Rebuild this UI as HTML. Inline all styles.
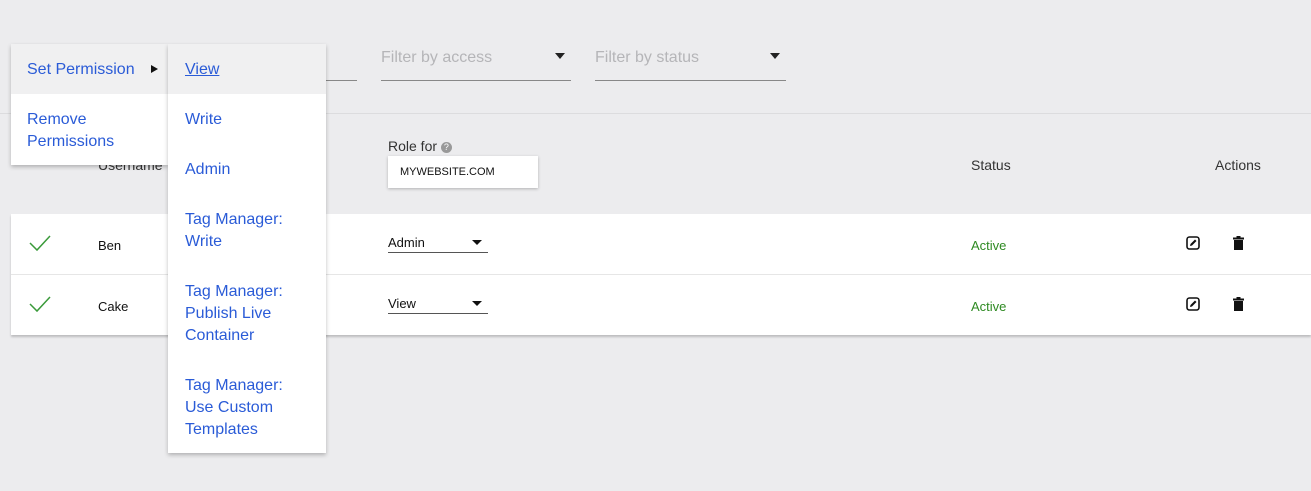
<!DOCTYPE html>
<html><head><style>
body{margin:0;width:1311px;height:491px;background:#ececee;font-family:"Liberation Sans",sans-serif;position:relative;overflow:hidden}
.a{position:absolute}
.blue{color:#2a5bd7}
.filter{border-bottom:1px solid #888;height:80px;color:#b5b5b8;font-size:16px}
</style></head><body>
<div class="a filter" style="left:200px;width:157px;top:0;height:80px"></div>
<div class="a filter" style="left:381px;width:190px;top:0"><span class="a" style="top:49px">Filter by access</span><span class="a" style="right:6px;top:53px;border:5px solid transparent;border-top:6px solid #222"></span></div>
<div class="a filter" style="left:595px;width:191px;top:0"><span class="a" style="top:49px">Filter by status</span><span class="a" style="right:6px;top:53px;border:5px solid transparent;border-top:6px solid #222"></span></div>
<div class="a" style="left:0;right:0;top:113px;border-top:1px solid #dcdcde"></div>
<div class="a" style="left:11px;right:0;top:214px;height:121px;background:#fff;box-shadow:0 2px 2px rgba(0,0,0,.2)"></div>
<div class="a" style="left:11px;right:0;top:274px;border-top:1px solid #e6e6e6"></div>
<div class="a" style="left:98px;top:157px;font-size:14px;color:#333">Username</div>
<div class="a" style="left:388px;top:138px;font-size:14px;color:#333">Role for <span style="display:inline-block;width:11px;height:11px;border-radius:50%;background:#999;color:#fff;font-size:9px;text-align:center;line-height:11px;vertical-align:1px">?</span></div>
<div class="a" style="left:388px;top:156px;width:150px;height:32px;background:#fff;box-shadow:0 1px 3px rgba(0,0,0,.25);font-size:11px;line-height:32px;color:#111;text-indent:12px">MYWEBSITE.COM</div>
<div class="a" style="left:971px;top:157px;font-size:14px;color:#333">Status</div>
<div class="a" style="left:1215px;top:157px;font-size:14px;color:#333">Actions</div>
<svg class="a" style="left:28px;top:233px" width="24" height="20"><path d="M2 10 L9 17 L22 3" stroke="#3a9a3a" stroke-width="1.5" fill="none"/></svg>
<svg class="a" style="left:28px;top:294px" width="24" height="20"><path d="M2 10 L9 17 L22 3" stroke="#3a9a3a" stroke-width="1.5" fill="none"/></svg>
<div class="a" style="left:98px;top:238px;font-size:13px;color:#111">Ben</div>
<div class="a" style="left:98px;top:299px;font-size:13px;color:#111">Cake</div>
<div class="a" style="left:388px;top:235px;width:100px;height:17px;border-bottom:1px solid #555;font-size:13px;color:#111">Admin<span class="a" style="right:6px;top:5px;border:5px solid transparent;border-top:5px solid #111"></span></div>
<div class="a" style="left:388px;top:296px;width:100px;height:17px;border-bottom:1px solid #555;font-size:13px;color:#111">View<span class="a" style="right:6px;top:5px;border:5px solid transparent;border-top:5px solid #111"></span></div>
<div class="a" style="left:971px;top:238px;font-size:13px;color:#2e8a22">Active</div>
<div class="a" style="left:971px;top:299px;font-size:13px;color:#2e8a22">Active</div>
<svg class="a" style="left:1186px;top:236px" width="14" height="14"><rect x="1" y="1" width="12" height="12" rx="2.5" fill="none" stroke="#111" stroke-width="1.6"/><path d="M4 10 L4.5 8 L9 3.5 L10.5 5 L6 9.5 Z" fill="#111"/></svg>
<svg class="a" style="left:1186px;top:297px" width="14" height="14"><rect x="1" y="1" width="12" height="12" rx="2.5" fill="none" stroke="#111" stroke-width="1.6"/><path d="M4 10 L4.5 8 L9 3.5 L10.5 5 L6 9.5 Z" fill="#111"/></svg>
<svg class="a" style="left:1233px;top:236px" width="11" height="14"><rect x="0" y="1.5" width="11" height="2" fill="#111"/><rect x="3.5" y="0" width="4" height="2" fill="#111"/><rect x="1" y="4" width="9" height="10" fill="#111"/></svg>
<svg class="a" style="left:1233px;top:297px" width="11" height="14"><rect x="0" y="1.5" width="11" height="2" fill="#111"/><rect x="3.5" y="0" width="4" height="2" fill="#111"/><rect x="1" y="4" width="9" height="10" fill="#111"/></svg>

<div class="a" style="left:11px;top:44px;width:157px;height:121px;background:#fff;box-shadow:0 2px 4px rgba(0,0,0,.25);font-size:16px;line-height:22px">
<div class="a" style="left:0;top:0;width:157px;height:50px;background:#f0f0f1"></div>
<div class="a blue" style="left:16px;top:15px">Set Permission</div>
<span class="a" style="left:140px;top:21px;border:4px solid transparent;border-left:7px solid #111;border-right:0"></span>
<div class="a blue" style="left:16px;top:65px">Remove<br>Permissions</div>
</div>
<div class="a" style="left:168px;top:44px;width:158px;height:409px;background:#fff;box-shadow:0 2px 4px rgba(0,0,0,.25);font-size:16px;line-height:22px">
<div class="a" style="left:0;top:0;width:158px;height:50px;background:#f0f0f1"></div>
<div class="a blue" style="left:17px;top:15px;text-decoration:underline">View</div>
<div class="a blue" style="left:17px;top:65px">Write</div>
<div class="a blue" style="left:17px;top:115px">Admin</div>
<div class="a blue" style="left:17px;top:165px">Tag Manager:<br>Write</div>
<div class="a blue" style="left:17px;top:237px">Tag Manager:<br>Publish Live<br>Container</div>
<div class="a blue" style="left:17px;top:331px">Tag Manager:<br>Use Custom<br>Templates</div>
</div>
</body></html>
